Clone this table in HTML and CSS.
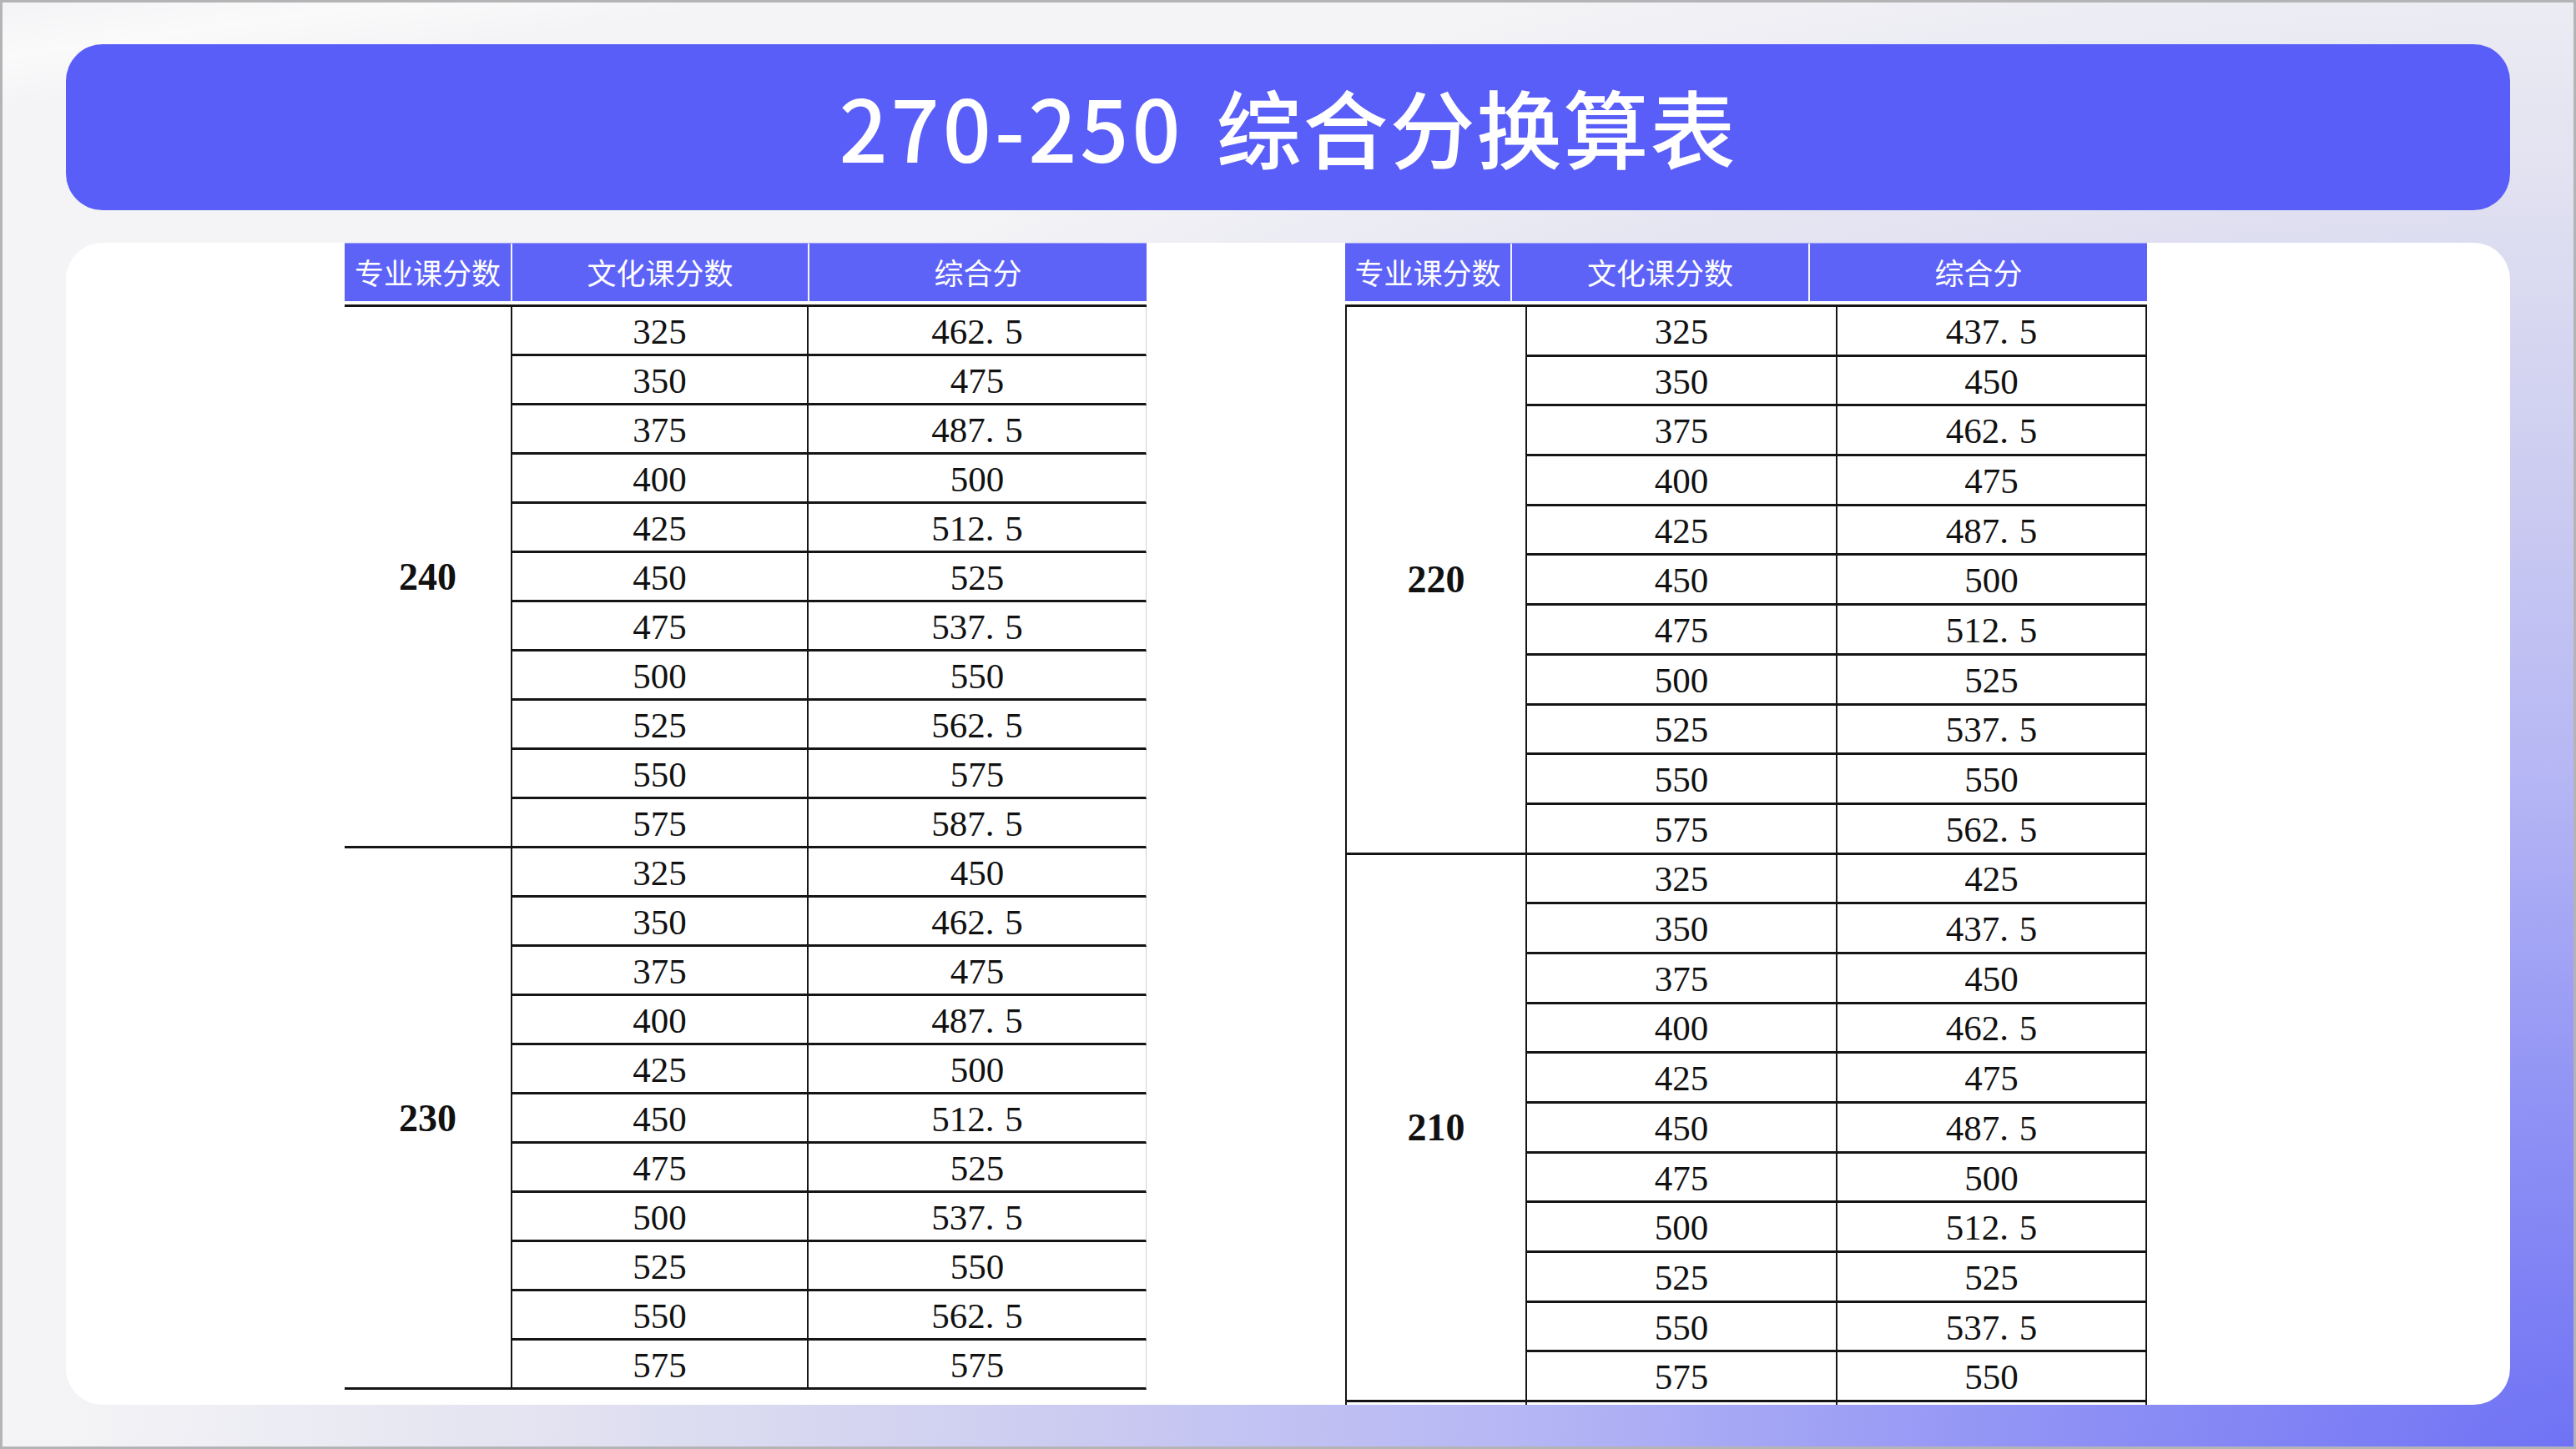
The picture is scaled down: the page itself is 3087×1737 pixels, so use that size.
FILE: index.html
```html
<!DOCTYPE html>
<html lang="zh-CN">
<head>
<meta charset="utf-8">
<title>270-250 综合分换算表</title>
<link rel="stylesheet" href="styles.css">
</head>
<body>
<div class="slide">
  <header class="title-bar">
    <h1 class="title"><span class="num">270-250</span> 综合分换算表</h1>
  </header>
  <main class="panel">
    <section class="tbl tbl-left">
      <div class="thead">
        <div class="th">专业课分数</div>
        <div class="th">文化课分数</div>
        <div class="th">综合分</div>
      </div>
      <div class="tbody">
        <div class="grp">240</div>
        <div class="c2">325</div><div class="c3">462<span class="pt">.</span>5</div>
        <div class="c2">350</div><div class="c3">475</div>
        <div class="c2">375</div><div class="c3">487<span class="pt">.</span>5</div>
        <div class="c2">400</div><div class="c3">500</div>
        <div class="c2">425</div><div class="c3">512<span class="pt">.</span>5</div>
        <div class="c2">450</div><div class="c3">525</div>
        <div class="c2">475</div><div class="c3">537<span class="pt">.</span>5</div>
        <div class="c2">500</div><div class="c3">550</div>
        <div class="c2">525</div><div class="c3">562<span class="pt">.</span>5</div>
        <div class="c2">550</div><div class="c3">575</div>
        <div class="c2">575</div><div class="c3">587<span class="pt">.</span>5</div>
        <div class="grp">230</div>
        <div class="c2">325</div><div class="c3">450</div>
        <div class="c2">350</div><div class="c3">462<span class="pt">.</span>5</div>
        <div class="c2">375</div><div class="c3">475</div>
        <div class="c2">400</div><div class="c3">487<span class="pt">.</span>5</div>
        <div class="c2">425</div><div class="c3">500</div>
        <div class="c2">450</div><div class="c3">512<span class="pt">.</span>5</div>
        <div class="c2">475</div><div class="c3">525</div>
        <div class="c2">500</div><div class="c3">537<span class="pt">.</span>5</div>
        <div class="c2">525</div><div class="c3">550</div>
        <div class="c2">550</div><div class="c3">562<span class="pt">.</span>5</div>
        <div class="c2">575</div><div class="c3">575</div>
      </div>
    </section>
    <section class="tbl tbl-right">
      <div class="thead">
        <div class="th">专业课分数</div>
        <div class="th">文化课分数</div>
        <div class="th">综合分</div>
      </div>
      <div class="tbody">
        <div class="grp">220</div>
        <div class="c2">325</div><div class="c3">437<span class="pt">.</span>5</div>
        <div class="c2">350</div><div class="c3">450</div>
        <div class="c2">375</div><div class="c3">462<span class="pt">.</span>5</div>
        <div class="c2">400</div><div class="c3">475</div>
        <div class="c2">425</div><div class="c3">487<span class="pt">.</span>5</div>
        <div class="c2">450</div><div class="c3">500</div>
        <div class="c2">475</div><div class="c3">512<span class="pt">.</span>5</div>
        <div class="c2">500</div><div class="c3">525</div>
        <div class="c2">525</div><div class="c3">537<span class="pt">.</span>5</div>
        <div class="c2">550</div><div class="c3">550</div>
        <div class="c2">575</div><div class="c3">562<span class="pt">.</span>5</div>
        <div class="grp">210</div>
        <div class="c2">325</div><div class="c3">425</div>
        <div class="c2">350</div><div class="c3">437<span class="pt">.</span>5</div>
        <div class="c2">375</div><div class="c3">450</div>
        <div class="c2">400</div><div class="c3">462<span class="pt">.</span>5</div>
        <div class="c2">425</div><div class="c3">475</div>
        <div class="c2">450</div><div class="c3">487<span class="pt">.</span>5</div>
        <div class="c2">475</div><div class="c3">500</div>
        <div class="c2">500</div><div class="c3">512<span class="pt">.</span>5</div>
        <div class="c2">525</div><div class="c3">525</div>
        <div class="c2">550</div><div class="c3">537<span class="pt">.</span>5</div>
        <div class="c2">575</div><div class="c3">550</div>
        <div class="c1x"></div><div class="c2x"></div><div class="c3x"></div>
      </div>
    </section>
  </main>
</div>
</body>
</html>
```

FILE: styles.css
```css
* { box-sizing: border-box; }

html, body {
  margin: 0;
  padding: 0;
}

body {
  width: 3087px;
  height: 1737px;
  overflow: hidden;
  font-family: "Noto Sans CJK SC", "Noto Sans", sans-serif;
}

.slide {
  width: 3087px;
  height: 1737px;
  border: 3px solid #b4b4b6;
  padding: 50px 76px 0 76px;
  background:
    linear-gradient(172deg, rgba(255,255,255,0) 0%, rgba(255,255,255,0.55) 3%, rgba(255,255,255,0) 6%, rgba(255,255,255,0) 100%),
    radial-gradient(ellipse 115% 130% at 100% 100%, #6f72f4 0%, #9092f5 18%, #b6b7f4 36%, #cdcdf1 52%, #e2e2f1 68%, #f4f4f6 85%, #f4f4f6 100%);
}

.title-bar {
  height: 199px;
  border-radius: 44px;
  background: #5a5ef8;
  display: flex;
  align-items: center;
  justify-content: center;
}

.title {
  margin: 0;
  color: #ffffff;
  font-family: "Noto Sans CJK SC", "Noto Sans", sans-serif;
  font-weight: 500;
  font-size: 102px;
  line-height: 1;
  letter-spacing: 2px;
  word-spacing: 14px;
  padding-bottom: 4px;
}

.num {
  letter-spacing: 4px;
}

.panel {
  margin-top: 39px;
  height: 1393px;
  border-radius: 44px;
  background: #ffffff;
  overflow: hidden;
  display: flex;
  align-items: flex-start;
  padding-left: 334px;
  gap: 238px;
}

.tbl {
  width: 961px;
  flex: none;
}

.thead {
  display: grid;
  height: 70px;
  background: #5e63f8;
  border-top: 1px solid #9ea1fa;
}

.tbl-left .thead { grid-template-columns: 199px 356px 406px; }
.tbl-right .thead { grid-template-columns: 198px 357px 406px; }

.th {
  display: flex;
  align-items: center;
  justify-content: center;
  color: #ffffff;
  font-family: "Noto Sans CJK SC", "Noto Sans", sans-serif;
  font-size: 35px;
  font-weight: 400;
  line-height: 1;
  padding-bottom: 2px;
}

.th + .th {
  border-left: 2px solid #f4f4ff;
}

.tbody {
  margin-top: 4px;
  display: grid;
  border-top: 3px solid #151515;
  font-family: "Liberation Serif", "Times New Roman", serif;
  color: #111111;
}

.tbl-left .tbody {
  grid-template-columns: 199px 355px 407px;
  grid-auto-rows: 59px;
}

.tbl-right .tbody {
  grid-template-columns: 216px 372px 373px;
  grid-auto-rows: 59.7px;
}

.grp {
  grid-row: span 11;
  display: flex;
  align-items: center;
  justify-content: center;
  font-weight: 700;
  font-size: 46px;
  border-bottom: 3px solid #151515;
}

.c2, .c3 {
  display: flex;
  align-items: center;
  justify-content: center;
  font-size: 43px;
  border-bottom: 3px solid #151515;
  border-left: 2px solid #151515;
  padding-top: 2px;
}

.pt {
  letter-spacing: 0.3em;
}

.tbl-left .c3 {
  border-right: 1px solid #cfcfcf;
}

.tbl-right .grp {
  border-left: 2px solid #151515;
}

.tbl-right .c3 {
  border-right: 2px solid #151515;
}

.c1x { border-left: 2px solid #151515; }
.c2x { border-left: 2px solid #151515; }
.c3x { border-left: 2px solid #151515; border-right: 2px solid #151515; }
```
